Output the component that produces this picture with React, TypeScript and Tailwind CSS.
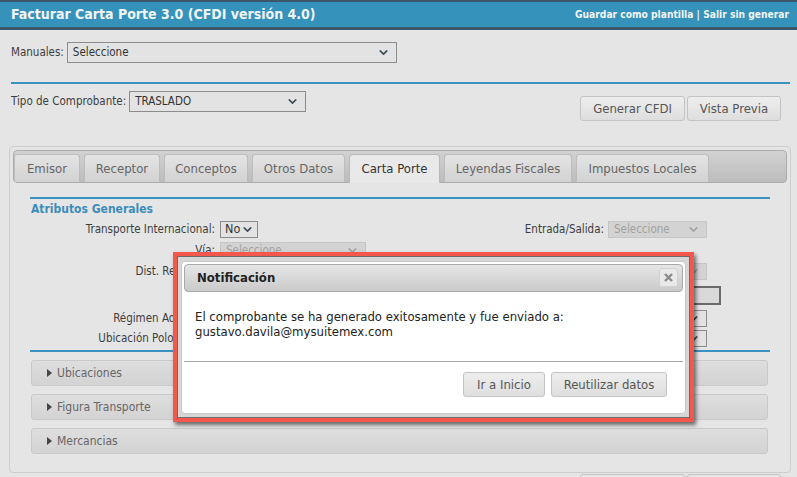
import { ChevronDown } from "lucide-react";

type SelectProps = { value?: string; className?: string; disabled?: boolean };

const Select = ({ value = "", className = "", disabled = false }: SelectProps) => (
    <div
        className={`flex items-center justify-between overflow-hidden border ${
            disabled ? "border-[#c6c6c6] bg-[#d3d3d3] text-[#a2a2a2]" : "border-[#8c8c8c] bg-[#e3e3e3] text-[#333]"
        } ${className}`}
    >
        <span className="whitespace-nowrap">{value}</span>
        <ChevronDown size={13} strokeWidth={3} className={disabled ? "shrink-0 text-[#a4a4a4]" : "shrink-0 text-[#3f4f59]"} />
    </div>
);

const Button = ({ label, className = "" }: { label: string; className?: string }) => (
    <div
        className={`flex h-[25px] items-center justify-center rounded-[3px] border border-[#c4c4c4] bg-linear-to-b from-[#eeeeee] to-[#dedede] text-[13px] text-[#555] ${className}`}
    >
        {label}
    </div>
);

const tabs = [
    { label: "Emisor", w: "w-[66px]" },
    { label: "Receptor", w: "w-[76px]" },
    { label: "Conceptos", w: "w-[84px]" },
    { label: "Otros Datos", w: "w-[93px]" },
    { label: "Carta Porte", w: "w-[91px]", active: true },
    { label: "Leyendas Fiscales", w: "w-[128px]" },
    { label: "Impuestos Locales", w: "w-[133px]" },
];

const FormRow = ({ label, className = "", children, right }: { label: string; className?: string; children?: React.ReactNode; right?: React.ReactNode }) => (
    <div className={`flex items-center ${className}`}>
        <div className="w-[185px] shrink-0 text-right">{label}</div>
        <div className="flex w-[260px] shrink-0 pl-[5px]">{children}</div>
        {right}
    </div>
);

const RightField = ({ label, children }: { label: string; children: React.ReactNode }) => (
    <div className="flex items-center">
        <div className="w-[129px] text-right">{label}</div>
        <div className="ml-[4px] flex">{children}</div>
    </div>
);

const Accordion = ({ label }: { label: string }) => (
    <div className="flex h-[26px] items-center rounded-[3px] border border-[#c9c9c9] bg-linear-to-b from-[#dedede] to-[#d3d3d3] pl-[15px] text-[12px] text-[#666]">
        <svg width="6" height="8" viewBox="0 0 6 8" className="mr-[4px]">
            <polygon points="0,0 5,4 0,8" fill="#444" />
        </svg>
        {label}
    </div>
);

export default function App() {
    return (
        <div className="relative h-[477px] w-[797px] overflow-hidden bg-[#e5e5e5] font-['DejaVu_Sans_Condensed','DejaVu_Sans',sans-serif] text-[11.5px] text-[#3d3d3d]">
            <header className="flex h-[30px] items-center justify-between border-t-[2px] border-b-[3px] border-[#3b5769] bg-[#3592bb] pl-[11px] pr-[8px] text-[#f2f5f7]">
                <span className="text-[14px] font-bold">Facturar Carta Porte 3.0 (CFDI versión 4.0)</span>
                <span className="text-[10.2px] font-bold">Guardar como plantilla | Salir sin generar</span>
            </header>

            <div className="px-[11px]">
                <div className="mt-[12px] flex items-center gap-[3px]">
                    <span>Manuales:</span>
                    <Select value="Seleccione" className="h-[21px] w-[330px] pr-[6px] pl-[5px]" />
                </div>
                <div className="mt-[19px] h-[2px] w-[779px] bg-[#3a92c0]" />
                <div className="mt-[7px] flex items-start">
                    <div className="flex items-center gap-[3px]">
                        <span>Tipo de Comprobante:</span>
                        <Select value="TRASLADO" className="h-[21px] w-[177px] pr-[6px] pl-[5px]" />
                    </div>
                    <div className="mr-[5px] ml-auto mt-[5px] flex gap-[2px]">
                        <Button label="Generar CFDI" className="w-[105px]" />
                        <Button label="Vista Previa" className="w-[94px]" />
                    </div>
                </div>
            </div>

            <div className="mt-[25px] ml-[9px] h-[327px] w-[782px] rounded-[4px] border border-[#cdcdcd] p-[3px]">
                <div className="flex h-[33px] items-end gap-[4px] rounded-[4px] border border-[#ababab] bg-linear-to-b from-[#d2d2d2] to-[#bcbcbc]">
                    {tabs.map((t) => (
                        <div
                            key={t.label}
                            className={`flex items-center justify-center rounded-t-[4px] border border-b-0 text-[13px] ${t.w} ${
                                t.active
                                    ? "-mb-px h-[29px] border-[#b9b9b9] bg-[#e9e9e9] text-[#333]"
                                    : "h-[28px] border-[#bdbdbd] bg-linear-to-b from-[#e4e4e4] to-[#d2d2d2] text-[#666]"
                            }`}
                        >
                            {t.label}
                        </div>
                    ))}
                </div>

                <div className="pl-[17px]">
                    <div className="mt-[14px] h-[2px] w-[740px] bg-[#3a92c0]" />
                    <div className="mt-[2px] h-[16px] pl-[1px] text-[12px] font-bold leading-[16px] text-[#3c8dbc]">Atributos Generales</div>

                    <FormRow
                        label="Transporte Internacional:"
                        className="mt-[4px] h-[17px]"
                        right={
                            <RightField label="Entrada/Salida:">
                                <Select value="Seleccione" disabled className="h-[17px] w-[99px] pr-[6px] pl-[5px]" />
                            </RightField>
                        }
                    >
                        <Select value="No" className="h-[17px] w-[38px] pr-[3px] pl-[4px] text-[12.5px]" />
                    </FormRow>
                    <FormRow label="Vía:" className="mt-[4px] h-[17px]">
                        <Select value="Seleccione" disabled className="h-[17px] w-[146px] pr-[6px] pl-[5px]" />
                    </FormRow>
                    <FormRow
                        label="Dist. Recorrida:"
                        className="mt-[4px] h-[17px]"
                        right={
                            <RightField label="País Origen:">
                                <Select value="Seleccione" disabled className="h-[17px] w-[99px] pr-[6px] pl-[5px]" />
                            </RightField>
                        }
                    >
                        <div className="h-[17px] w-[80px] border border-[#999] bg-[#eee]" />
                    </FormRow>
                    <FormRow
                        label=""
                        className="mt-[6px] h-[19px]"
                        right={
                            <RightField label="Total:">
                                <div className="h-[19px] w-[113px] border-2 border-[#6a6a6a] bg-[#d9d9d9]" />
                            </RightField>
                        }
                    />
                    <FormRow
                        label="Régimen Aduanero:"
                        className="mt-[5px] h-[17px]"
                        right={
                            <RightField label="Régimen:">
                                <Select value="Seleccione" className="h-[17px] w-[99px] pr-[6px] pl-[5px]" />
                            </RightField>
                        }
                    >
                        <Select value="Seleccione" className="h-[17px] w-[146px] pr-[6px] pl-[5px]" />
                    </FormRow>
                    <FormRow
                        label="Ubicación Polo Origen:"
                        className="mt-[3px] h-[17px]"
                        right={
                            <RightField label="Polo Destino:">
                                <Select value="Seleccione" className="h-[17px] w-[99px] pr-[6px] pl-[5px]" />
                            </RightField>
                        }
                    >
                        <Select value="Seleccione" className="h-[17px] w-[146px] pr-[6px] pl-[5px]" />
                    </FormRow>

                    <div className="mt-[3px] h-[2px] w-[740px] bg-[#3a92c0]" />

                    <div className="mt-[8px] flex w-[738px] flex-col gap-[8px] pl-[1px]">
                        <Accordion label="Ubicaciones" />
                        <Accordion label="Figura Transporte" />
                        <Accordion label="Mercancias" />
                    </div>
                </div>
            </div>

            <div className="mt-[1px] mr-[16px] flex justify-end gap-[2px]">
                <div className="h-[25px] w-[105px] rounded-[3px] border border-[#c4c4c4] bg-[#e6e6e6]" />
                <div className="h-[25px] w-[94px] rounded-[3px] border border-[#c4c4c4] bg-[#e6e6e6]" />
            </div>

            {/* notification dialog, highlighted with a red frame */}
            <div className="absolute top-[252px] left-[173px] h-[170px] w-[521px] border-[4px] border-[#f4574b] shadow-[2px_3px_4px_rgba(0,0,0,0.55)]">
                <div className="h-full border border-[#6b6b6b] bg-[#d6d6d6] p-[3px] pt-[4px]">
                    <div className="flex h-full flex-col rounded-[4px] border border-[#c8c8c8] bg-white p-[2px]">
                        <div className="relative flex h-[28px] shrink-0 items-center rounded-[4px] border border-[#a9a9a9] bg-linear-to-b from-[#e6e6e6] to-[#cacaca] pl-[12px] text-[13px] font-bold text-[#222]">
                            Notificación
                            <div className="absolute top-[3px] right-[4px] flex h-[19px] w-[19px] items-center justify-center rounded-[3px] border border-[#d2d2d2] bg-[#e9e9e9]">
                                <svg width="9" height="9" viewBox="0 0 9 9">
                                    <path d="M1 1 L8 8 M8 1 L1 8" stroke="#8a8a8a" strokeWidth="2.4" />
                                </svg>
                            </div>
                        </div>
                        <div className="px-[11px] pt-[17px] pb-[22px] text-[13px] leading-[15px] text-[#222]">
                            El comprobante se ha generado exitosamente y fue enviado a:
                            <br />
                            gustavo.davila@mysuitemex.com
                        </div>
                        <div className="h-px shrink-0 bg-[#a9a9a9]" />
                        <div className="mt-[10px] flex justify-end gap-[6px] pr-[16px]">
                            <Button label="Ir a Inicio" className="w-[82px]" />
                            <Button label="Reutilizar datos" className="w-[116px]" />
                        </div>
                    </div>
                </div>
            </div>
        </div>
    );
}
